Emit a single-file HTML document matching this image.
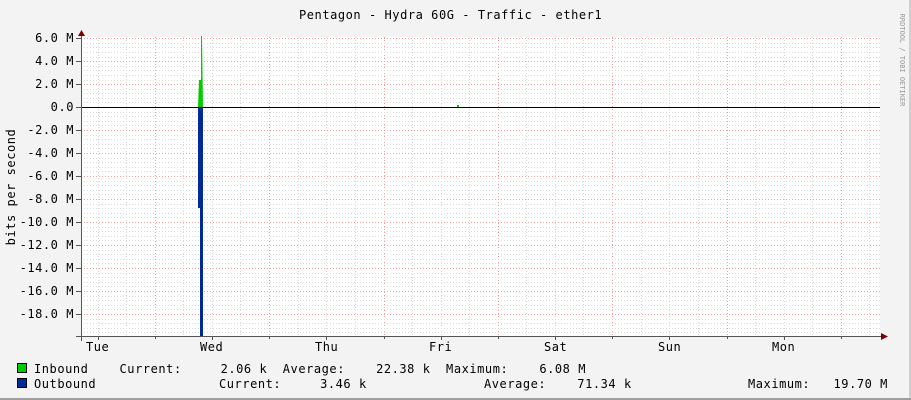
<!DOCTYPE html><html><head><style>html,body{margin:0;padding:0;background:#f3f3f3}svg{display:block}text{font-family:"DejaVu Sans Mono","Liberation Mono",monospace;font-size:12px;letter-spacing:0.55px;fill:#000}</style></head><body>
<svg width="911" height="400" xmlns="http://www.w3.org/2000/svg">
<rect x="0" y="0" width="911" height="400" fill="#f3f3f3"/>
<rect x="909" y="0" width="2" height="400" fill="#cfcfcf"/>
<rect x="0" y="398" width="911" height="2" fill="#9f9f9f"/>
<rect x="81" y="37" width="799" height="299" fill="#ffffff"/>
<g stroke="#d8d8d8" stroke-dasharray="1,2" stroke-width="1">
<path d="M98.5 37V336M126.5 37V336M183.5 37V336M212.5 37V336M240.5 37V336M298.5 37V336M326.5 37V336M355.5 37V336M412.5 37V336M441.5 37V336M469.5 37V336M526.5 37V336M555.5 37V336M583.5 37V336M641.5 37V336M669.5 37V336M698.5 37V336M755.5 37V336M784.5 37V336M812.5 37V336M869.5 37V336"/>
</g>
<g stroke="#f3a0a0" stroke-dasharray="1,2">
<path d="M155.5 37V336M269.5 37V336M384.5 37V336M498.5 37V336M612.5 37V336M727.5 37V336M841.5 37V336"/>
<path d="M81 38.5H880M81 61.5H880M81 84.5H880M81 130.5H880M81 153.5H880M81 176.5H880M81 199.5H880M81 222.5H880M81 245.5H880M81 268.5H880M81 291.5H880M81 314.5H880"/>
</g>
<g stroke="#dddddd" stroke-dasharray="1,2">
<path d="M81 43.5H880M81 47.5H880M81 52.5H880M81 57.5H880M81 66.5H880M81 70.5H880M81 75.5H880M81 80.5H880M81 89.5H880M81 93.5H880M81 98.5H880M81 102.5H880M81 112.5H880M81 116.5H880M81 121.5H880M81 125.5H880M81 135.5H880M81 139.5H880M81 144.5H880M81 148.5H880M81 158.5H880M81 162.5H880M81 167.5H880M81 171.5H880M81 181.5H880M81 185.5H880M81 190.5H880M81 194.5H880M81 204.5H880M81 208.5H880M81 213.5H880M81 217.5H880M81 227.5H880M81 231.5H880M81 236.5H880M81 240.5H880M81 250.5H880M81 254.5H880M81 259.5H880M81 263.5H880M81 273.5H880M81 277.5H880M81 282.5H880M81 286.5H880M81 296.5H880M81 300.5H880M81 305.5H880M81 309.5H880M81 319.5H880M81 323.5H880M81 328.5H880M81 332.5H880"/>
</g>
<path d="M198 107L199 80L201 80L201 36L202 36L203 107Z" fill="#00cc00"/>
<rect x="457" y="105" width="2" height="2" fill="#00cc00"/>
<rect x="198" y="107" width="5" height="101" fill="#002a97"/>
<rect x="200" y="107" width="3" height="229" fill="#002a97"/>
<path d="M81 107.5H880" stroke="#000" stroke-width="1"/>
<path d="M81.5 33V341" stroke="#555"/>
<path d="M76 336.5H885" stroke="#555"/>
<path d="M78 36L81.5 30L85 36Z" fill="#800000"/>
<path d="M881 333L888 336.5L881 340Z" fill="#800000"/>
<g stroke="#555"><path d="M76 38.5H81M76 61.5H81M76 84.5H81M76 107.5H81M76 130.5H81M76 153.5H81M76 176.5H81M76 199.5H81M76 222.5H81M76 245.5H81M76 268.5H81M76 291.5H81M76 314.5H81"/>
<path d="M98.5 336V340M212.5 336V340M326.5 336V340M441.5 336V340M555.5 336V340M669.5 336V340M784.5 336V340M155.5 336V339M269.5 336V339M384.5 336V339M498.5 336V339M612.5 336V339M727.5 336V339M841.5 336V339"/></g>
<text x="299" y="19">Pentagon - Hydra 60G - Traffic - ether1</text>
<g text-anchor="end">
<text x="74" y="42">6.0 M</text><text x="74" y="65">4.0 M</text><text x="74" y="88">2.0 M</text><text x="74" y="111">0.0</text>
<text x="74" y="134">-2.0 M</text><text x="74" y="157">-4.0 M</text><text x="74" y="180">-6.0 M</text><text x="74" y="203">-8.0 M</text>
<text x="74" y="226">-10.0 M</text><text x="74" y="249">-12.0 M</text><text x="74" y="272">-14.0 M</text><text x="74" y="295">-16.0 M</text><text x="74" y="318">-18.0 M</text>
</g>
<text transform="translate(15,187) rotate(-90)" text-anchor="middle">bits per second</text>
<text transform="translate(900,60) rotate(90)" style="font-size:7px;letter-spacing:0;fill:#999" text-anchor="middle">RRDTOOL / TOBI OETIKER</text>
<text x="86" y="351">Tue</text><text x="200" y="351">Wed</text><text x="315" y="351">Thu</text><text x="429" y="351">Fri</text><text x="544" y="351">Sat</text><text x="658" y="351">Sun</text><text x="772" y="351">Mon</text>
<rect x="17.5" y="363.5" width="9" height="9" fill="#00cc00" stroke="#000"/>
<rect x="17.5" y="378.5" width="9" height="9" fill="#002a97" stroke="#000"/>
<text x="34" y="373" xml:space="preserve">Inbound    Current:     2.06 k  Average:    22.38 k  Maximum:    6.08 M</text>
<text x="34" y="388">Outbound</text>
<text x="219" y="388" xml:space="preserve">Current:     3.46 k</text>
<text x="484" y="388" xml:space="preserve">Average:    71.34 k</text>
<text x="748" y="388" xml:space="preserve">Maximum:   19.70 M</text>
</svg>
</body></html>
